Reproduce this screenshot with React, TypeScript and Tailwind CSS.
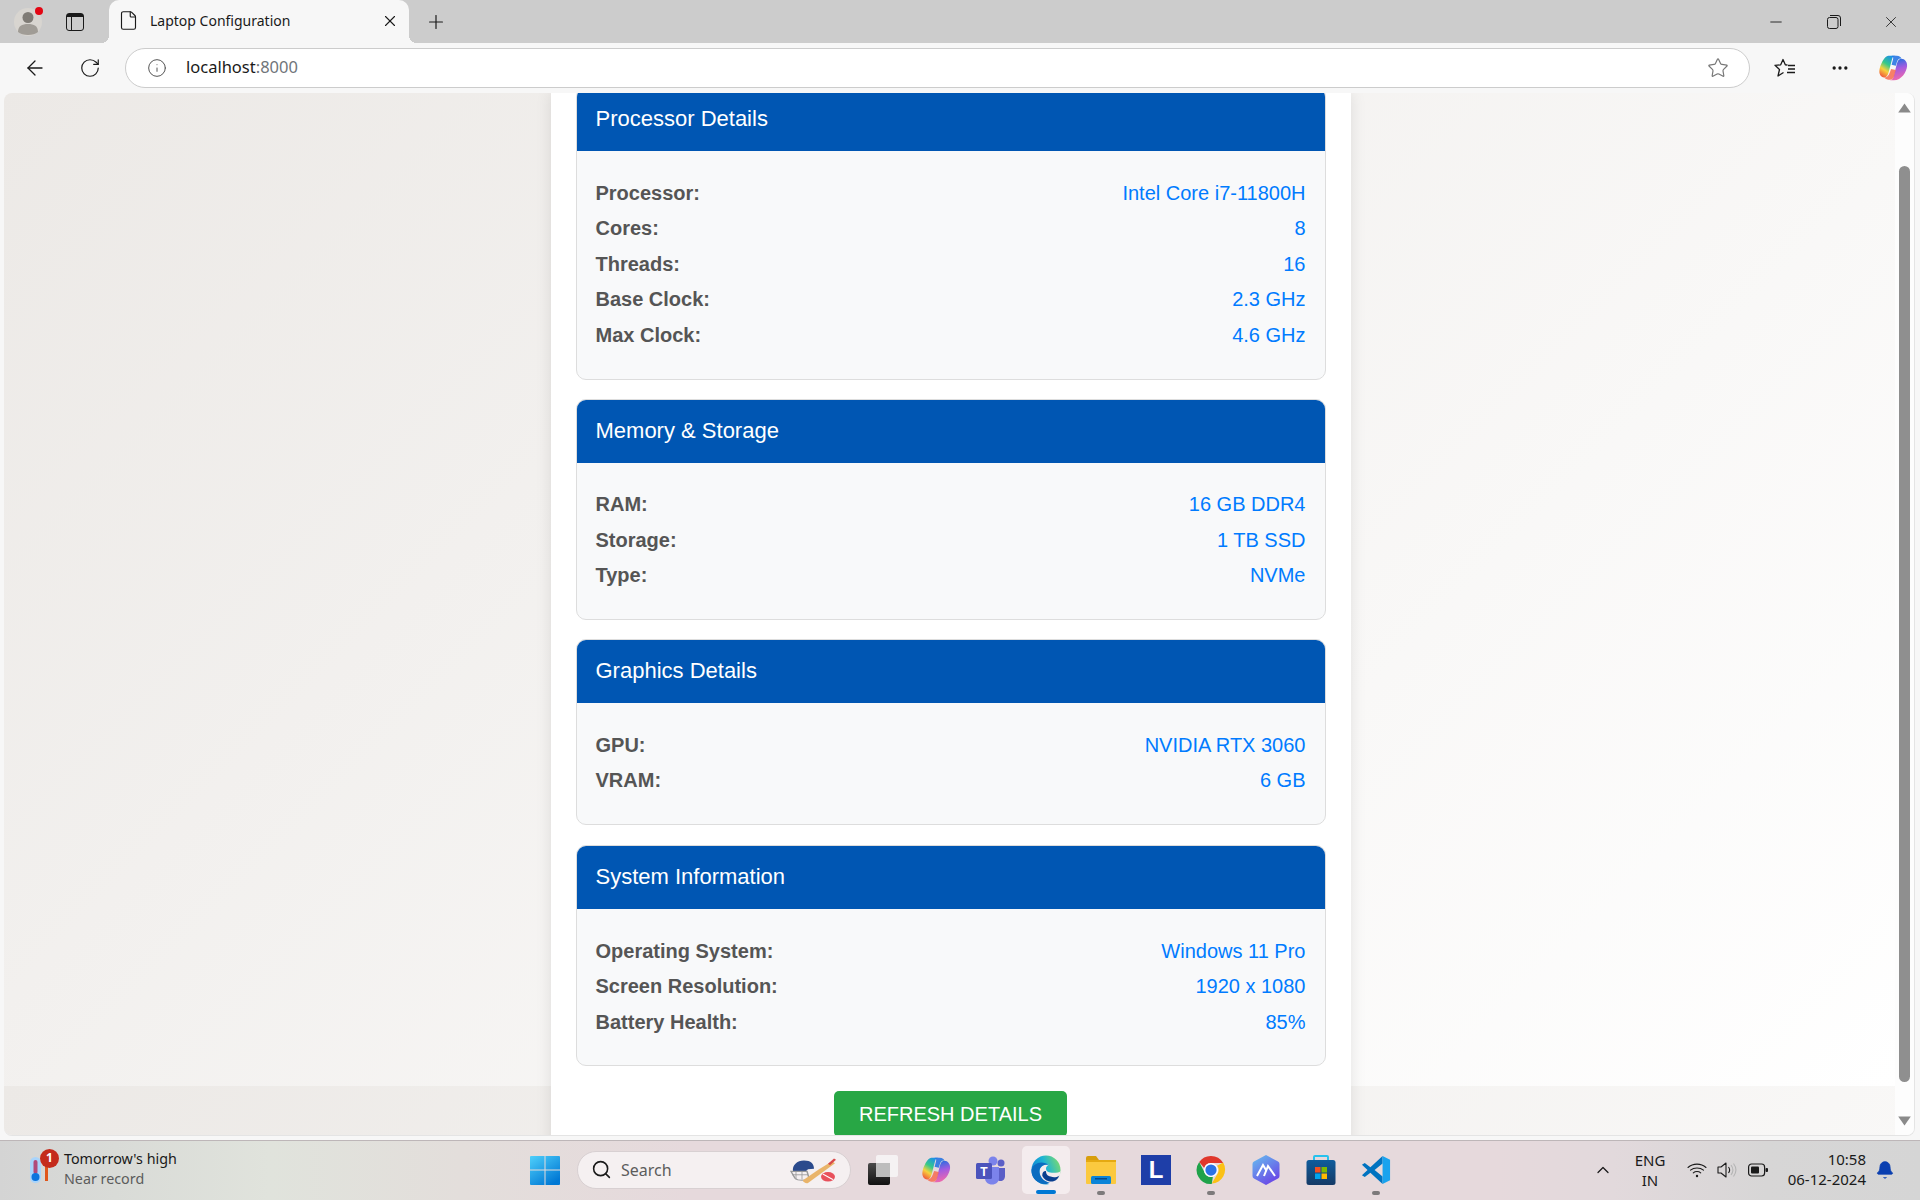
import { ArrowLeft, RotateCw, Info, Star, X, Plus, Minus, File, Ellipsis, ChevronUp, Search, Bell } from 'lucide-react';

const sections = [
  {
    title: 'Processor Details',
    body: 'pb-[26px]',
    outer: '-mt-[6px] -mb-[1px]',
    rows: [
      ['Processor:', 'Intel Core i7-11800H'],
      ['Cores:', '8'],
      ['Threads:', '16'],
      ['Base Clock:', '2.3 GHz'],
      ['Max Clock:', '4.6 GHz'],
    ],
  },
  {
    title: 'Memory & Storage',
    body: 'pb-[26px]',
    outer: '-mb-[1px]',
    rows: [
      ['RAM:', '16 GB DDR4'],
      ['Storage:', '1 TB SSD'],
      ['Type:', 'NVMe'],
    ],
  },
  {
    title: 'Graphics Details',
    body: 'pb-[26px]',
    outer: '',
    rows: [
      ['GPU:', 'NVIDIA RTX 3060'],
      ['VRAM:', '6 GB'],
    ],
  },
  {
    title: 'System Information',
    body: 'pb-[25px]',
    outer: '',
    rows: [
      ['Operating System:', 'Windows 11 Pro'],
      ['Screen Resolution:', '1920 x 1080'],
      ['Battery Health:', '85%'],
    ],
  },
];

function CopilotLogo({ size, id }: { size: number; id: string }) {
  return (
    <svg width={size} height={size} viewBox="0 0 32 32">
      <defs>
        <linearGradient id={`${id}a`} x1="0.7" y1="0" x2="0.2" y2="1">
          <stop offset="0" stopColor="#1c8fe8" />
          <stop offset="0.4" stopColor="#35c98a" />
          <stop offset="0.68" stopColor="#f7d23c" />
          <stop offset="1" stopColor="#f0553c" />
        </linearGradient>
        <linearGradient id={`${id}b`} x1="0.4" y1="0" x2="0.6" y2="1">
          <stop offset="0" stopColor="#1f6fe0" />
          <stop offset="0.45" stopColor="#a45be0" />
          <stop offset="1" stopColor="#f56aa8" />
        </linearGradient>
      </defs>
      <path d="M11 3h8c-2 0-3.400 1.200-4 3.400L11.500 20c-1 3.400-2 6-5 6C3 26 1 22.500 1.500 18.500 2 13 7 3 11 3z" fill={`url(#${id}a)`} />
      <path d="M17 29H12.500c2 0 3.200-1 4-3.500L20 12c1-3.500 2-6 5-6 3.500 0 6.500 3.500 6 8-.5 6-6 15-14 15z" fill={`url(#${id}b)`} />
      <path d="M13 28.500c-3 0-5-1-6.500-2.500 3 .5 5-2 6-5l1.500-4 5 1-2 7c-.6 2-2 3.500-4 3.500z" fill="#f76b4f" opacity="0.85" />
      <path d="M14.500 3H20c3 0 4.500 1.500 5 3-2.500-.5-4 1-5 4l-1 3.500-4.500-1L16 7c.4-2 .5-3-1.500-4z" fill="#1d6fe3" opacity="0.85" />
    </svg>
  );
}

function EdgeLogo() {
  return (
    <svg width="30" height="30" viewBox="0 0 32 32">
      <defs>
        <linearGradient id="edgeMain" x1="0" y1="0.6" x2="1" y2="0.2">
          <stop offset="0" stopColor="#0c7fd6" />
          <stop offset="0.5" stopColor="#1eb4d4" />
          <stop offset="1" stopColor="#7edb6c" />
        </linearGradient>
      </defs>
      <circle cx="16" cy="16" r="15.500" fill="url(#edgeMain)" />
      <path d="M31.500 17c-1 1.500-4 2-7.500 2-5 0-8-1-8-4.500 0-1.500 1-3 3-4-5-1.500-10 2-10 8 0 6 5 11 11 13.500C26 31 31 25 31.500 17z" fill="#f3ecee" />
      <path d="M9 17c0 6 4.500 11 11 12.500C16 32 9 31 5 27 1 23 .5 19 .5 16 2 11 6 8 11 8c3 0 6 1 8 2.500-6-1-10 2-10 6.500z" fill="#0c6cc0" />
      <path d="M12 22c2 5 8 7 12 6 3-1 5-3 6-6-3 2-6 2-9 1-4-1-5-3-5-6-3 0-4 2-4 5z" fill="#0a3f8f" />
    </svg>
  );
}

function ChromeLogo() {
  return (
    <svg width="30" height="30" viewBox="0 0 32 32">
      <path d="M16 1a15 15 0 0 1 13 7.500H16a7.500 7.500 0 0 0-7.200 5.300L3.400 7.500A15 15 0 0 1 16 1z" fill="#e0372c" />
      <path d="M29 8.500A15 15 0 0 1 16.800 31l6-10.300A7.500 7.500 0 0 0 22.500 12z" fill="#fbc116" transform="translate(0 -0.500)" />
      <path d="M3.400 7.500l6.200 12A7.500 7.500 0 0 0 18 23.300L16.800 31A15 15 0 0 1 3.400 7.500z" fill="#1fa24a" />
      <circle cx="16" cy="16" r="7.500" fill="#fff" />
      <circle cx="16" cy="16" r="6" fill="#2b72e6" />
    </svg>
  );
}

function VsCodeLogo() {
  return (
    <svg width="30" height="30" viewBox="0 0 32 32">
      <path d="M23 1 10 13 4 8.500 1 10.500 7 16 1 21.500 4 23.500 10 19 23 31 23 23 14.500 16 23 9z" fill="#0073c0" />
      <path d="M23 1 31 5V27L23 31z" fill="#1aa3ee" />
    </svg>
  );
}

function TaskView() {
  return (
    <svg width="30" height="30" viewBox="0 0 30 30">
      <defs>
        <linearGradient id="tvDark" x1="0" y1="0" x2="0" y2="1">
          <stop offset="0" stopColor="#4a4a4a" />
          <stop offset="1" stopColor="#111" />
        </linearGradient>
      </defs>
      <rect x="0" y="8" width="22" height="22" rx="2" fill="url(#tvDark)" />
      <rect x="8" y="0" width="22" height="22" rx="2" fill="#f6f4f5" opacity="0.9" />
      <rect x="8" y="8" width="14" height="14" fill="#bdbdbd" />
    </svg>
  );
}

function TeamsLogo() {
  return (
    <svg width="30" height="30" viewBox="0 0 30 30">
      <circle cx="25" cy="8" r="3.500" fill="#5b5fc7" />
      <path d="M20 13h9v8c0 3-2 5-4.500 5S20 24 20 21z" fill="#5b5fc7" />
      <circle cx="17" cy="6" r="4.500" fill="#7b83eb" />
      <path d="M9 12h14v11c0 4-3 6.500-7 6.500S9 27 9 23z" fill="#7b83eb" />
      <rect x="0" y="8" width="16" height="16" rx="1.500" fill="#4b53bc" />
      <text x="8" y="20.500" textAnchor="middle" fontSize="12" fontWeight="700" fill="#fff" fontFamily="'Liberation Sans', sans-serif">T</text>
    </svg>
  );
}

function FolderLogo() {
  return (
    <svg width="30" height="28" viewBox="0 0 30 28">
      <path d="M0 2a2 2 0 0 1 2-2h8l3 4h-13z" fill="#d89e0c" />
      <rect x="0" y="4" width="30" height="24" rx="1" fill="#fbc93f" />
      <rect x="0" y="4" width="30" height="2" fill="#e5a911" />
      <rect x="5" y="20" width="20" height="8" rx="1.500" fill="#0b84d8" />
      <rect x="9" y="22" width="12" height="1.500" fill="#06498a" />
    </svg>
  );
}

function ArcLogo() {
  return (
    <svg width="30" height="32" viewBox="0 0 30 32">
      <defs>
        <linearGradient id="arcGrad" x1="0.2" y1="0" x2="0.8" y2="1">
          <stop offset="0" stopColor="#66b6ee" />
          <stop offset="1" stopColor="#6b3fe6" />
        </linearGradient>
      </defs>
      <path d="M15 1 27 7.500a3 3 0 0 1 1.500 2.600V22a3 3 0 0 1-1.500 2.600L15 31 3 24.600A3 3 0 0 1 1.500 22V10.100A3 3 0 0 1 3 7.500z" fill="url(#arcGrad)" />
      <path d="M6 22 12 11l3 5M13 22l4-10 7 10" fill="none" stroke="#fff" strokeWidth="2" />
    </svg>
  );
}

function StoreLogo() {
  return (
    <svg width="30" height="32" viewBox="0 0 30 32">
      <defs>
        <linearGradient id="storeBag" x1="0" y1="0" x2="0" y2="1">
          <stop offset="0" stopColor="#0f5c9c" />
          <stop offset="1" stopColor="#153a66" />
        </linearGradient>
      </defs>
      <path d="M8 7V3a1 1 0 0 1 1-1h12a1 1 0 0 1 1 1v4" fill="none" stroke="#27c2ee" strokeWidth="2" />
      <rect x="0.500" y="6" width="29" height="25" rx="2.500" fill="url(#storeBag)" />
      <rect x="9" y="13" width="5.500" height="5.500" fill="#f25022" />
      <rect x="15.500" y="13" width="5.500" height="5.500" fill="#7fba00" />
      <rect x="9" y="19.500" width="5.500" height="5.500" fill="#00a4ef" />
      <rect x="15.500" y="19.500" width="5.500" height="5.500" fill="#ffb900" />
    </svg>
  );
}

function StartLogo() {
  return (
    <svg width="30" height="30" viewBox="0 0 30 30">
      <defs>
        <linearGradient id="winGrad" x1="0" y1="0" x2="0.7" y2="1">
          <stop offset="0" stopColor="#4fd0fb" />
          <stop offset="1" stopColor="#0078d4" />
        </linearGradient>
      </defs>
      <path d="M1 1h13.500v13.500H0V2a1 1 0 0 1 1-1zM15.500 1H29a1 1 0 0 1 1 1v12.500H15.500zM0 15.500h14.500V30H1a1 1 0 0 1-1-1zM15.500 15.500H30V29a1 1 0 0 1-1 1H15.500z" fill="url(#winGrad)" />
    </svg>
  );
}

function CricketArt() {
  return (
    <svg width="50" height="30" viewBox="0 0 50 44" preserveAspectRatio="none">
      <path d="M5 24c-1-9 4-16 11-16s10 5 10 12l-6 1-3 4z" fill="#2b4a8c" />
      <path d="M3 24h16l2 10c-3 4-11 4-14 0z" fill="none" stroke="#9a9a9a" strokeWidth="1.500" />
      <path d="M8 24v12M14 24v12M4 29h16" stroke="#9a9a9a" strokeWidth="1" />
      <path d="M44 9 47 12 35 25 20 41c-2 1-5-1-5-4l16-16z" fill="#e9b46a" />
      <path d="M40 13 46 5l2 2-6 8z" fill="#d94a4a" />
      <circle cx="40" cy="32" r="7" fill="#e8505b" />
      <path d="M35 28l10 8" stroke="#fff" strokeWidth="1.500" />
    </svg>
  );
}

function WeatherIcon() {
  return (
    <svg width="20" height="30" viewBox="0 0 20 30">
      <rect x="0" y="2" width="11" height="26" rx="5.500" fill="#a9d4fb" />
      <rect x="3.500" y="5" width="4" height="14" rx="2" fill="#b04a7a" />
      <circle cx="5.500" cy="22" r="4" fill="#0b74de" />
      <rect x="15" y="8" width="3" height="18" fill="#e0561b" />
    </svg>
  );
}

function FavoritesIcon() {
  return (
    <svg width="22" height="20" viewBox="0 0 22 20" fill="none" stroke="#1a1a1a" strokeWidth="1.300" strokeLinejoin="round">
      <path d="M9.500 14.500 4 18 5.500 11.500 1 7.300 6.700 6.800 9 1.500 11.300 6.800 13.500 7" />
      <path d="M14 7.500h7M14 11h7M13 14.500h8" />
    </svg>
  );
}

function Wifi() {
  return (
    <svg width="20" height="16" viewBox="0 0 20 16" fill="none" stroke="#1a1a1a" strokeWidth="1.100" strokeLinecap="round">
      <path d="M1 5.500c5-4.500 13-4.500 18 0M3.500 8.200c3.500-3 9.500-3 13 0M6.300 10.800c2-1.700 5.400-1.700 7.400 0" />
      <circle cx="10" cy="14" r="1.200" fill="#1a1a1a" stroke="none" />
    </svg>
  );
}

function Speaker() {
  return (
    <svg width="20" height="18" viewBox="0 0 20 18" fill="none" stroke="#1a1a1a" strokeWidth="1.100" strokeLinejoin="round">
      <path d="M1 6h3l5-4v14l-5-4H1z" />
      <path d="M11.500 6c1.300 1.700 1.300 4.300 0 6" />
      <path d="M14 4c2.300 3 2.300 7 0 10M16.500 2.500c3 4 3 9 0 13" stroke="#b5b5b5" />
    </svg>
  );
}

function BatteryIcon() {
  return (
    <svg width="20" height="14" viewBox="0 0 20 14">
      <rect x="0.600" y="1" width="16" height="12" rx="3" fill="none" stroke="#1a1a1a" strokeWidth="1.200" />
      <rect x="3" y="3.500" width="8" height="7" rx="1" fill="#1a1a1a" />
      <rect x="17.500" y="5" width="2.500" height="4" rx="1" fill="#1a1a1a" />
    </svg>
  );
}

function Section({ title, rows, body, outer }: { title: string; rows: string[][]; body: string; outer: string }) {
  return (
    <section className={`overflow-hidden rounded-[10px] border border-[#dddddd] bg-[#f8f9fa] ${outer}`}>
      <h2 className="flex h-[63px] items-center bg-[#0056b3] px-[19px] pb-[2px] text-[22px] leading-[33px] font-normal text-white">{title}</h2>
      <div className={`px-[19px] pt-[24px] ${body}`}>
        {rows.map(([label, value]) => (
          <div key={label} className="flex h-[35.500px] items-center justify-between text-[20px]">
            <span className="font-bold text-[#555555]">{label}</span>
            <span className="text-[#007bff]">{value}</span>
          </div>
        ))}
      </div>
    </section>
  );
}

export default function App() {
  return (
    <div className="flex h-[1200px] w-[1920px] flex-col overflow-hidden bg-[#f7f7f7] font-['Noto_Sans',sans-serif] text-[#1a1a1a]">
      {/* tab strip */}
      <div className="flex h-[43px] shrink-0 items-center bg-[#cccccc]">
        <div className="relative ml-[14px] flex h-[28px] w-[28px] items-center justify-center overflow-visible rounded-full bg-[#d8d5d0]">
          <svg width="24" height="26" viewBox="0 0 24 26" fill="#7f7b75">
            <circle cx="12" cy="8.500" r="5.500" />
            <path d="M2 23c0-6 4-8 10-8s10 2 10 8c-2 2-6 3-10 3s-8-1-10-3z" fill="#a09c96" />
          </svg>
          <span className="absolute -top-[1px] right-[-1px] h-[8px] w-[8px] rounded-full bg-[#e30613]" />
        </div>
        <div className="ml-[24px] flex h-[18px] w-[18px] flex-col rounded-[3px] border-[1.500px] border-[#1a1a1a]">
          <div className="h-[3px] bg-[#1a1a1a]" />
          <div className="w-[5px] flex-1 border-r border-[#1a1a1a]" />
        </div>
        <div className="relative ml-[25px] flex h-[43px] w-[300px] items-center self-end rounded-t-[10px] bg-[#f7f7f7] pb-[2px]">
          <span className="absolute bottom-0 -left-[8px] h-[8px] w-[8px] bg-[radial-gradient(circle_at_0_0,transparent_8px,#f7f7f7_8px)]" />
          <span className="absolute -right-[8px] bottom-0 h-[8px] w-[8px] bg-[radial-gradient(circle_at_100%_0,transparent_8px,#f7f7f7_8px)]" />
          <File className="ml-[9px] h-[21px] w-[21px]" strokeWidth={1.300} />
          <span className="ml-[11px] text-[14px]">Laptop Configuration</span>
          <X className="absolute left-[272px] h-[18px] w-[18px]" strokeWidth={1.500} />
        </div>
        <Plus className="ml-[16px] h-[22px] w-[22px]" strokeWidth={1.300} />
        <div className="ml-auto flex items-center">
          <Minus className="mr-[42px] h-[18px] w-[18px]" strokeWidth={1.200} />
          <svg className="mr-[41px]" width="14" height="14" viewBox="0 0 14 14" fill="none" stroke="#1a1a1a" strokeWidth="1">
            <rect x="0.500" y="2.500" width="10.500" height="11" rx="2" />
            <path d="M3 .5h8a2.500 2.500 0 0 1 2.500 2.500v8" />
          </svg>
          <X className="mr-[20px] h-[18px] w-[18px]" strokeWidth={1.100} />
        </div>
      </div>

      {/* toolbar */}
      <div className="flex h-[50px] shrink-0 items-center pb-[1px]">
        <ArrowLeft className="ml-[23px] h-[24px] w-[24px]" strokeWidth={1.300} />
        <RotateCw className="ml-[32px] h-[22px] w-[22px]" strokeWidth={1.300} />
        <div className="ml-[24px] flex h-[40px] w-[1625px] items-center rounded-full border border-[#cccccc] bg-white">
          <Info className="ml-[21px] h-[20px] w-[20px] text-[#555555]" strokeWidth={1.200} />
          <span className="ml-[19px] text-[16.500px]">
            localhost<span className="text-[#70757a]">:8000</span>
          </span>
          <Star className="mr-[20px] ml-auto h-[22px] w-[22px] text-[#777777]" strokeWidth={1.300} />
        </div>
        <div className="ml-[24px]">
          <FavoritesIcon />
        </div>
        <Ellipsis className="ml-[34px] h-[20px] w-[20px]" strokeWidth={2} />
        <div className="ml-[28px]">
          <CopilotLogo size={30} id="copTop" />
        </div>
      </div>

      {/* page */}
      <div className="flex min-h-0 flex-1 pr-[5px] pb-[4px] pl-[4px]">
        <div className="flex min-w-0 flex-1 overflow-hidden rounded-[8px] border-r border-b border-[#e4e4e4]">
          <main className="flex flex-1 justify-center overflow-hidden bg-[linear-gradient(135deg,#ece9e6,#ffffff)] bg-size-[100%_1000px] bg-position-[0_-7px] pl-[2px] font-['Liberation_Sans',sans-serif]">
            <div className="flex h-[1060px] w-[800px] shrink-0 flex-col gap-[20px] bg-white px-[25px] shadow-[0_0_15px_rgba(0,0,0,0.1)]">
              {sections.map((s) => (
                <Section key={s.title} title={s.title} rows={s.rows} body={s.body} outer={s.outer} />
              ))}
              <button className="mx-auto mt-[5px] h-[46px] w-[233px] shrink-0 rounded-[5px] bg-[#28a745] text-[20px] text-white uppercase">Refresh Details</button>
            </div>
          </main>
          <div className="flex w-[19px] shrink-0 flex-col items-center bg-[#fdfdfd]">
            <svg className="mt-[10px]" width="13" height="10" viewBox="0 0 13 10"><path d="M6.500 0.500 12.800 9.500H0.200z" fill="#8a8a8a" /></svg>
            <div className="mt-[53px] h-[916px] w-[11px] rounded-full bg-[#8f8f8f]" />
            <svg className="mt-auto mb-[9px]" width="13" height="10" viewBox="0 0 13 10"><path d="M6.500 9.500 12.800 0.500H0.200z" fill="#8a8a8a" /></svg>
          </div>
        </div>
      </div>

      {/* taskbar */}
      <footer className="flex h-[60px] shrink-0 items-center border-t border-[#bdb6b8] bg-[linear-gradient(90deg,#d4d4d4_0%,#d9dbd7_6%,#e0e3dc_14%,#e3dedb_24%,#e6d9dc_36%,#e6d9dc_78%,#e2d9dc_84%,#d7d6d6_92%,#d5d5d5_100%)] pb-[2px]">
        <div className="relative ml-[30px] flex w-[34px] items-center">
          <WeatherIcon />
          <span className="absolute -top-[6px] left-[10px] flex h-[19px] w-[19px] items-center justify-center rounded-full bg-[#c42b1c] text-[12px] font-bold text-white">1</span>
        </div>
        <div className="-mt-[2px] flex w-[151px] flex-col text-[14.300px] leading-[20px]">
          <span>Tomorrow's high</span>
          <span className="text-[#5c5c5c]">Near record</span>
        </div>
        <div className="ml-[315px]">
          <StartLogo />
        </div>
        <div className="ml-[17px] flex h-[38px] w-[274px] items-center rounded-full border border-[#d8d0d2] bg-[#f5f0f1]">
          <Search className="ml-[13px] h-[21px] w-[21px]" strokeWidth={1.800} />
          <span className="ml-[9px] text-[16px] text-[#5c5c5c]">Search</span>
          <div className="mr-[12px] ml-auto">
            <CricketArt />
          </div>
        </div>
        <div className="ml-[17px]">
          <TaskView />
        </div>
        <div className="ml-[23px]">
          <CopilotLogo size={30} id="copBar" />
        </div>
        <div className="ml-[25px]">
          <TeamsLogo />
        </div>
        <div className="relative ml-[16px] flex h-[48px] w-[48px] items-center justify-center rounded-[5px] bg-[#f4ecee]">
          <EdgeLogo />
          <span className="absolute bottom-0 left-[14px] h-[4px] w-[20px] rounded-full bg-[#0078d4]" />
        </div>
        <div className="relative ml-[16px]">
          <FolderLogo />
          <span className="absolute top-[35px] left-[11px] h-[4px] w-[8px] rounded-full bg-[#7d7a7b]" />
        </div>
        <div className="ml-[25px] flex h-[30px] w-[30px] items-center justify-center bg-[#1e3ea8] font-['Liberation_Sans',sans-serif] text-[24px] font-bold text-white">L</div>
        <div className="relative ml-[25px]">
          <ChromeLogo />
          <span className="absolute top-[36px] left-[11px] h-[4px] w-[8px] rounded-full bg-[#7d7a7b]" />
        </div>
        <div className="ml-[25px]">
          <ArcLogo />
        </div>
        <div className="ml-[25px]">
          <StoreLogo />
        </div>
        <div className="relative ml-[25px]">
          <VsCodeLogo />
          <span className="absolute top-[36px] left-[11px] h-[4px] w-[8px] rounded-full bg-[#7d7a7b]" />
        </div>
        <ChevronUp className="ml-[202px] h-[20px] w-[20px]" strokeWidth={1.500} />
        <div className="ml-[17px] flex w-[40px] flex-col items-center text-[15px] leading-[20px]">
          <span>ENG</span>
          <span>IN</span>
        </div>
        <div className="ml-[17px]">
          <Wifi />
        </div>
        <div className="ml-[10px]">
          <Speaker />
        </div>
        <div className="ml-[11px]">
          <BatteryIcon />
        </div>
        <div className="-mt-[2px] ml-[10px] flex w-[88px] flex-col items-end text-[15px] leading-[20px]">
          <span>10:58</span>
          <span>06-12-2024</span>
        </div>
        <Bell className="ml-[9px] h-[20px] w-[20px] text-[#0a3fb0]" fill="#0a3fb0" strokeWidth={1} />
      </footer>
    </div>
  );
}
